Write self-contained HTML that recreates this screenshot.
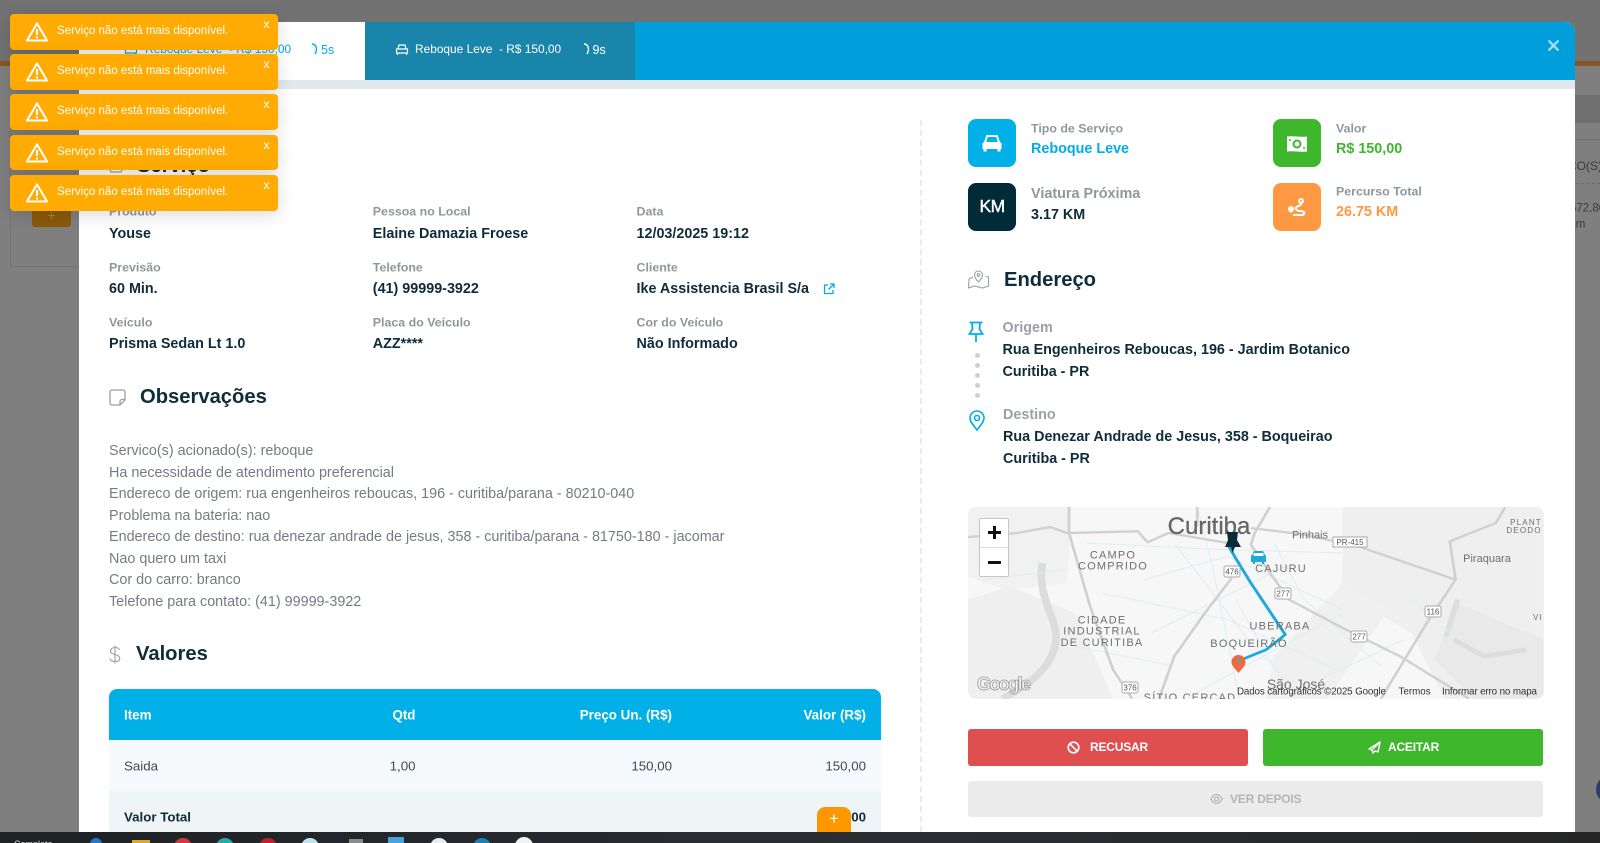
<!DOCTYPE html>
<html lang="pt-BR"><head><meta charset="utf-8"><title>Serviço</title>
<style>
*{box-sizing:border-box}
html,body{margin:0;padding:0}
body{width:1600px;height:843px;overflow:hidden;position:relative;background:#7f7f7f;font-family:"Liberation Sans",sans-serif}
.a{position:absolute;white-space:nowrap;line-height:1}
.l{font-size:12.4px;color:#8f979e;font-weight:bold;transform:translateY(calc(-50% + .5px))}
.v{font-size:14.35px;color:#0e2c39;font-weight:bold;transform:translateY(calc(-50% + 1px))}
.h{font-size:20.2px;color:#0e2c39;font-weight:bold;transform:translateY(calc(-50% + 1px))}
.o{font-size:14.36px;color:#747c83;transform:translateY(calc(-50% + 1px))}
.t{font-size:11.9px;transform:translateY(-50%)}
.r{transform:translate(-100%,-50%)}
.toast{position:absolute;left:9.5px;width:268px;background:#ffab03;border-radius:4px;box-shadow:0 4px 18px rgba(0,0,0,.14)}
.toast span{position:absolute;left:47.5px;top:50%;transform:translateY(-50%);margin-top:-.5px;font-size:11.5px;color:#fff;white-space:nowrap}
.toast i{position:absolute;left:254px;top:3px;font-style:normal;font-size:12px;color:#fff;line-height:14px}
.toast svg{position:absolute;left:16px;top:8px}
.ic{position:absolute;width:48px;height:48px;border-radius:8px}
.btn{position:absolute;border-radius:3px}
.b{font-size:12px;font-weight:bold;transform:translateY(-50%);letter-spacing:-.2px}
svg{position:absolute;overflow:visible}
</style></head><body>

<!-- backdrop -->
<div class="a" style="left:0;top:0;width:1600px;height:61px;background:#727272"></div>
<div class="a" style="left:0;top:61px;width:1600px;height:5px;background:#8a5524"></div>
<div class="a" style="left:1575px;top:95px;width:25px;height:28px;background:#6f6f6f"></div>
<div class="a" style="left:1575px;top:139px;width:25px;height:1px;background:#6c6c6c"></div>
<div class="a" style="left:1575px;top:183px;width:25px;border-top:1px dashed #6c6c6c"></div>
<div class="a" style="left:1568px;top:166px;font-size:12px;color:#3b3b3b;transform:translateY(-50%)">ÇO(S)</div>
<div class="a" style="left:1570px;top:209px;font-size:11.5px;color:#3b3b3b;transform:translateY(-50%)">572,80</div>
<div class="a" style="left:1570px;top:225px;font-size:11.5px;color:#3b3b3b;transform:translateY(-50%)">km</div>
<div class="a" style="left:10px;top:120px;width:70px;height:147px;border:1px solid #747474"></div>
<div class="a" style="left:32px;top:195px;width:39px;height:32px;background:#8a5a0a;border-radius:3px;color:#a8834a;text-align:center;font-size:14px;line-height:40px">+</div>
<div class="a" style="left:1596px;top:775px;width:30px;height:29px;border-radius:50%;background:#2c3c6a"></div>

<!-- modal -->
<div class="a" style="left:78.5px;top:22px;width:1496.5px;height:810px;background:#fff;border-radius:0 10px 0 0"></div>
<div class="a" style="left:78.5px;top:22px;width:1496.5px;height:57.5px;background:#009edb;border-radius:0 10px 0 0"></div>
<div class="a" style="left:78.5px;top:79.5px;width:1496.5px;height:9px;background:#e1e9f0"></div>
<div class="a" style="left:78.5px;top:22px;width:286px;height:57.5px;background:#fff"></div>
<div class="a" style="left:364.5px;top:22px;width:270.5px;height:57.5px;background:#1a85ab"></div>

<svg style="left:124px;top:43px" width="14" height="13" viewBox="0 0 14 13" fill="none" stroke="#00aee6" stroke-width="1.2"><path d="M3 6 4 2h6l1 4M1.500 6h11v4h-11zM2.500 10v2M11.500 10v2"/></svg>
<div class="a t" style="left:145px;top:50px;color:#00aee6">Reboque Leve&nbsp; - R$ 150,00</div>
<svg style="left:311px;top:43px" width="9" height="14" viewBox="0 0 9 14" fill="none" stroke="#00aee6" stroke-width="1.400"><path d="M1 1c4 0 6 5 3 10"/></svg>
<div class="a t" style="left:321px;top:50px;color:#00aee6;font-size:12.500px">5s</div>

<svg style="left:395px;top:43px" width="14" height="13" viewBox="0 0 14 13" fill="none" stroke="#fff" stroke-width="1.200"><path d="M3 6 4 2h6l1 4M1.500 6h11v4h-11zM2.500 10v2M11.500 10v2"/></svg>
<div class="a t" style="left:415px;top:50px;color:#fff">Reboque Leve&nbsp; - R$ 150,00</div>
<svg style="left:583px;top:43px" width="9" height="14" viewBox="0 0 9 14" fill="none" stroke="#fff" stroke-width="1.400"><path d="M1 1c4 0 6 5 3 10"/></svg>
<div class="a t" style="left:592.500px;top:50px;color:#fff;font-size:12.500px">9s</div>

<svg style="left:1548px;top:40px" width="11" height="11" viewBox="0 0 11 11" stroke="#a8def5" stroke-width="2.300" stroke-linecap="round"><path d="M1.200 1.200l8.600 8.600M9.800 1.200l-8.600 8.600"/></svg>

<!-- left col -->
<svg style="left:109px;top:158px" width="14" height="15" viewBox="0 0 14 15" fill="none" stroke="#9a9fa4" stroke-width="1.300"><rect x="1" y="1" width="12" height="13" rx="2"/></svg>
<div class="a h" style="left:137px;top:165px">Serviço</div>

<div class="a l" style="left:109px;top:211px">Produto</div>
<div class="a v" style="left:109px;top:232.500px">Youse</div>
<div class="a l" style="left:372.800px;top:211px">Pessoa no Local</div>
<div class="a v" style="left:372.800px;top:232.500px">Elaine Damazia Froese</div>
<div class="a l" style="left:636.500px;top:211px">Data</div>
<div class="a v" style="left:636.500px;top:232.500px">12/03/2025 19:12</div>

<div class="a l" style="left:109px;top:267px">Previsão</div>
<div class="a v" style="left:109px;top:288px">60 Min.</div>
<div class="a l" style="left:372.800px;top:267px">Telefone</div>
<div class="a v" style="left:372.800px;top:288px">(41) 99999-3922</div>
<div class="a l" style="left:636.500px;top:267px">Cliente</div>
<div class="a v" style="left:636.500px;top:288px">Ike Assistencia Brasil S/a</div>
<svg style="left:823px;top:283px" width="12" height="12" viewBox="0 0 12 12" fill="none" stroke="#00aee6" stroke-width="1.300"><path d="M5 2H1.500v8.500H10V7M7 1h4v4M11 1 5.500 6.500"/></svg>

<div class="a l" style="left:109px;top:322px">Veículo</div>
<div class="a v" style="left:109px;top:343px">Prisma Sedan Lt 1.0</div>
<div class="a l" style="left:372.800px;top:322px">Placa do Veículo</div>
<div class="a v" style="left:372.800px;top:343px">AZZ****</div>
<div class="a l" style="left:636.500px;top:322px">Cor do Veículo</div>
<div class="a v" style="left:636.500px;top:343px">Não Informado</div>

<svg style="left:109px;top:389px" width="17" height="17" viewBox="0 0 17 17" fill="none" stroke="#9a9fa4" stroke-width="1.300"><path d="M3 1h11a2 2 0 0 1 2 2v8l-5 5H3a2 2 0 0 1-2-2V3a2 2 0 0 1 2-2zM16 10.500h-3a2 2 0 0 0-2 2V16"/></svg>
<div class="a h" style="left:140px;top:396px">Observações</div>

<div class="a o" style="left:109px;top:450px">Servico(s) acionado(s): reboque</div>
<div class="a o" style="left:109px;top:471.500px">Ha necessidade de atendimento preferencial</div>
<div class="a o" style="left:109px;top:493px">Endereco de origem: rua engenheiros reboucas, 196 - curitiba/parana - 80210-040</div>
<div class="a o" style="left:109px;top:514.500px">Problema na bateria: nao</div>
<div class="a o" style="left:109px;top:536px">Endereco de destino: rua denezar andrade de jesus, 358 - curitiba/parana - 81750-180 - jacomar</div>
<div class="a o" style="left:109px;top:557.500px">Nao quero um taxi</div>
<div class="a o" style="left:109px;top:579px">Cor do carro: branco</div>
<div class="a o" style="left:109px;top:600.500px">Telefone para contato: (41) 99999-3922</div>

<svg style="left:109px;top:645px" width="12" height="19" viewBox="0 0 12 19" fill="none" stroke="#9a9fa4" stroke-width="1.100"><path d="M10.500 5C10 3 8 2.500 6 2.500S1.500 3.500 1.500 6 4 9 6 9.500s4.800 1.500 4.800 4-2.400 3-4.800 3-4.500-.8-5-3M6 .500v18"/></svg>
<div class="a h" style="left:136px;top:653px">Valores</div>

<div class="a" style="left:109px;top:689px;width:772px;height:51px;background:#00b0e6;border-radius:8px 8px 0 0"></div>
<div class="a" style="left:109px;top:740px;width:772px;height:51px;background:#f6fafc"></div>
<div class="a" style="left:109px;top:791px;width:772px;height:41px;background:#eff4f7"></div>
<div class="a" style="left:124px;top:715px;font-size:13.400px;font-weight:bold;color:#fff;transform:translateY(-50%)">Item</div>
<div class="a r" style="left:415.500px;top:715px;font-size:13.400px;font-weight:bold;color:#fff">Qtd</div>
<div class="a r" style="left:672px;top:715px;font-size:13.400px;font-weight:bold;color:#fff">Preço Un. (R$)</div>
<div class="a r" style="left:866px;top:715px;font-size:13.400px;font-weight:bold;color:#fff">Valor (R$)</div>
<div class="a" style="left:124px;top:765.500px;font-size:13.300px;color:#3c4a52;transform:translateY(-50%)">Saida</div>
<div class="a r" style="left:415.500px;top:765.500px;font-size:13.300px;color:#3c4a52">1,00</div>
<div class="a r" style="left:672px;top:765.500px;font-size:13.300px;color:#3c4a52">150,00</div>
<div class="a r" style="left:866px;top:765.500px;font-size:13.300px;color:#3c4a52">150,00</div>
<div class="a" style="left:124px;top:817px;font-size:13.300px;font-weight:bold;color:#0e2c39;transform:translateY(-50%)">Valor Total</div>
<div class="a r" style="left:866px;top:817px;font-size:13.300px;font-weight:bold;color:#0e2c39">150,00</div>
<div class="a" style="left:817px;top:807px;width:34px;height:25px;background:#ff9800;border-radius:8px 8px 0 0;color:#fff;text-align:center;font-size:17px;line-height:24px">+</div>

<div class="a" style="left:919.500px;top:120px;height:712px;border-left:2px dashed #e9ecef"></div>

<!-- right col cards -->
<div class="ic" style="left:968px;top:119px;background:#00b0e6"></div>
<svg style="left:982px;top:134px" width="20" height="18" viewBox="0 0 20 18" fill="#fff"><path d="M4.500 1h11l2.500 7c1 .5 1.500 1 1.500 2v5h-1v2.500h-3V15h-11v2.500h-3V15h-1v-5c0-1 .5-1.500 1.500-2zM5.800 3 4.300 8h11.400l-1.500-5z" fill-rule="evenodd"/></svg>
<div class="a l" style="left:1031px;top:127.500px">Tipo de Serviço</div>
<div class="a v" style="left:1031px;top:147.500px;color:#00aee6">Reboque Leve</div>

<div class="ic" style="left:1273px;top:119px;background:#3eb72d"></div>
<svg style="left:1286px;top:134.500px" width="22" height="18" viewBox="0 0 22 18"><path d="M1 1.500c7-1 13 1 20 0v15c-7 1-13-1-20 0z" fill="#fff"/><circle cx="11" cy="9" r="4.500" fill="#3eb72d"/><circle cx="11" cy="9" r="2.500" fill="#fff"/><circle cx="4" cy="5" r="1" fill="#3eb72d"/><circle cx="18" cy="13" r="1" fill="#3eb72d"/></svg>
<div class="a l" style="left:1336px;top:127.500px">Valor</div>
<div class="a v" style="left:1336px;top:147.500px;color:#3eb72d">R$ 150,00</div>

<div class="ic" style="left:968px;top:183px;background:#022b3a"></div>
<div class="a" style="left:979.500px;top:198px;font-size:17.500px;color:#fff;letter-spacing:-.5px;-webkit-text-stroke:.4px #fff">KM</div>
<div class="a" style="left:1031px;top:193.500px;font-size:14.400px;font-weight:bold;color:#8f979e;transform:translateY(-50%)">Viatura Próxima</div>
<div class="a v" style="left:1031px;top:213.500px">3.17 KM</div>

<div class="ic" style="left:1273px;top:183px;background:#ff9843"></div>
<svg style="left:1287px;top:197px" width="20" height="20" viewBox="0 0 20 20" fill="none" stroke="#fff" stroke-width="2"><circle cx="14" cy="4" r="2"/><path d="M14 7c0 2-4 2-5 3.500S10 14 13 14c3 0 5 1 4 3-.5 1-2 1-3 1H6"/><path d="M4 9a3 3 0 0 1 3 3c0 2-3 4-3 4s-3-2-3-4a3 3 0 0 1 3-3z" fill="#fff" stroke="none"/></svg>
<div class="a l" style="left:1336px;top:191px">Percurso Total</div>
<div class="a v" style="left:1336px;top:211px;color:#ff9843">26.75 KM</div>

<svg style="left:968px;top:270px" width="21" height="19" viewBox="0 0 21 19" fill="none" stroke="#9a9fa4" stroke-width="1.100"><path d="M5 7 1 9l-.500 9 6-2 8 2 6-2V7l-3-1"/><path d="M10.500 1a4 4 0 0 1 4 4c0 3-4 7-4 7s-4-4-4-7a4 4 0 0 1 4-4z"/><circle cx="10.500" cy="5" r="1.300"/></svg>
<div class="a h" style="left:1004px;top:279px">Endereço</div>

<svg style="left:968px;top:321px" width="16" height="22" viewBox="0 0 16 22" fill="none" stroke="#00aee6" stroke-width="1.800"><path d="M1.500 1.500h13M4 1.500 4.500 8 1.500 13h13l-3-5 .5-6.500M8 13v8"/></svg>
<div class="a" style="left:974.500px;top:352.500px;width:5.500px;height:5.500px;border-radius:50%;background:#cfcfcf"></div>
<div class="a" style="left:974.500px;top:362.500px;width:5.500px;height:5.500px;border-radius:50%;background:#cfcfcf"></div>
<div class="a" style="left:974.500px;top:372.500px;width:5.500px;height:5.500px;border-radius:50%;background:#cfcfcf"></div>
<div class="a" style="left:974.500px;top:382.500px;width:5.500px;height:5.500px;border-radius:50%;background:#cfcfcf"></div>
<div class="a" style="left:974.500px;top:392.500px;width:5.500px;height:5.500px;border-radius:50%;background:#cfcfcf"></div>
<svg style="left:969px;top:410px" width="16" height="21" viewBox="0 0 16 21" fill="none" stroke="#00aee6" stroke-width="1.600"><path d="M8 1a7 7 0 0 1 7 7c0 4-4 8-7 12C5 16 1 12 1 8a7 7 0 0 1 7-7z"/><circle cx="8" cy="8" r="2.500"/></svg>

<div class="a" style="left:1002.500px;top:327.500px;font-size:14.350px;font-weight:bold;color:#9aa1a8;transform:translateY(-50%)">Origem</div>
<div class="a v" style="left:1002.500px;top:348.500px">Rua Engenheiros Reboucas, 196 - Jardim Botanico</div>
<div class="a v" style="left:1002.500px;top:370.500px">Curitiba - PR</div>
<div class="a" style="left:1003px;top:414.500px;font-size:14.350px;font-weight:bold;color:#9aa1a8;transform:translateY(-50%)">Destino</div>
<div class="a v" style="left:1003px;top:435.500px">Rua Denezar Andrade de Jesus, 358 - Boqueirao</div>
<div class="a v" style="left:1003px;top:457.500px">Curitiba - PR</div>

<!-- map -->
<div class="a" style="left:968px;top:507px;width:576px;height:192px;border-radius:8px;overflow:hidden;background:#f7f7f7">
<svg style="left:0;top:0" width="576" height="192" viewBox="0 0 576 192" font-family="'Liberation Sans',sans-serif">
 <g transform="translate(-8,-7.330) scale(.3827,.3333)" fill="none">
  <path d="M21 22H290L280 250 120 270 21 230z" fill="#f1f1f1"/>
  <path d="M21 300 130 260 300 340 400 597H21z" fill="#efefef"/>
  <path d="M1000 22h525v575h-260L1180 400 1000 280z" fill="#efefef"/>
  <path d="M1300 310 1525 420V597H1340L1240 480z" fill="#e9e9e9"/>
  <path d="M820 470 870 410 1000 250 1120 330 960 597H800z" fill="#f0f0f0"/>
  <path d="M215 190C200 300 260 360 250 430S180 560 110 597" stroke="#dcdcdc" stroke-width="20"/>
  <path d="M1290 420 1370 470 1480 450M1300 300l-30 110" stroke="#dddddd" stroke-width="14"/>
  <g stroke="#deeff0" stroke-width="3">
   <path d="M330 130 680 150 1000 160M480 240 700 170 1000 330M560 130 760 430 900 597M620 22l40 180 70 395M370 280 700 360 1000 520M500 400 850 200M600 590 1000 340M820 130 900 300 1100 500M940 540 1160 420"/>
   <path d="M60 240 280 210M300 440 560 500M720 300 850 560M1180 300 1280 400"/>
  </g>
  <g stroke="#d0d0d0" stroke-width="7" stroke-linejoin="round">
   <path d="M21 112 150 100 235 82 280 100 465 95 490 128 545 100 700 130"/>
   <path d="M285 22 285 100 340 320 400 510 450 597"/>
   <path d="M810 22 770 100 760 135 810 220 860 300 1000 385 1150 470 1330 597"/>
   <path d="M710 235 640 340 560 470 520 597"/>
   <path d="M1040 140 1295 240 1225 360 1100 597"/>
   <path d="M1295 240 1280 125 1400 70 1425 22"/>
   <path d="M760 85 900 105 1040 140"/>
   <path d="M620 22V80"/>
  </g>
  <path d="M700 135 720 175 760 250 850 405 800 450 740 478" stroke="#1da9dc" stroke-width="8" stroke-linejoin="round" stroke-linecap="round"/>
 </g>
 <g fill="#6f6f6f" text-anchor="middle" font-size="11" letter-spacing="1.200">
  <text x="241" y="27" font-size="24" letter-spacing="0" fill="#666" stroke="#666" stroke-width=".3">Curitiba</text>
  <text x="342" y="31.500" font-size="11" letter-spacing="0">Pinhais</text>
  <text x="145" y="51.500">CAMPO</text><text x="145" y="62.500">COMPRIDO</text>
  <text x="313" y="65">CAJURU</text>
  <text x="519" y="55" font-size="11" letter-spacing="0">Piraquara</text>
  <text x="558" y="18" font-size="8">PLANT</text><text x="556" y="26" font-size="8">DEODO</text>
  <text x="134" y="116.500">CIDADE</text><text x="134" y="127.500">INDUSTRIAL</text><text x="134" y="139">DE CURITIBA</text>
  <text x="312" y="122.500">UBERABA</text><text x="281" y="140">BOQUEIRÃO</text>
  <text x="328" y="182" font-size="14" letter-spacing="0">São José</text>
  <text x="222" y="194">SÍTIO CERCAD</text>
  <text x="570" y="113" font-size="8">VI</text>
 </g>
 <g font-size="8" text-anchor="middle" fill="#555">
  <rect x="365" y="30" width="34" height="10" fill="#fff" stroke="#aaa"/><text x="382" y="38">PR-415</text>
  <rect x="256" y="59" width="16" height="11" rx="2" fill="#fff" stroke="#aaa"/><text x="264" y="67.500">476</text>
  <rect x="307" y="81" width="16" height="11" rx="2" fill="#fff" stroke="#aaa"/><text x="315" y="89.500">277</text>
  <rect x="457" y="99" width="16" height="11" rx="2" fill="#fff" stroke="#aaa"/><text x="465" y="107.500">116</text>
  <rect x="383" y="124" width="16" height="11" rx="2" fill="#fff" stroke="#aaa"/><text x="391" y="132.500">277</text>
  <rect x="154" y="175" width="16" height="11" rx="2" fill="#fff" stroke="#aaa"/><text x="162" y="183.500">376</text>
 </g>
 <path d="M259 25h11l-1 8 4 7h-6l-2.500 6-1.500-6h-6l3-7z" fill="#0d2b36"/>
 <path d="M286 44h9l2 4c1 .5 1 1 1 2v5h-2v2h-2v-2h-7v2h-2v-2h-2v-5c0-1 0-1.500 1-2z" fill="#1da9dc"/>
 <rect x="285.500" y="46" width="10" height="3" fill="#fff"/>
 <path d="M270.500 148a7 7 0 0 1 7 7c0 4-4 7-7 11-3-4-7-7-7-11a7 7 0 0 1 7-7z" fill="#f0683c"/>
 <circle cx="270.500" cy="154" r="2.500" fill="#8a8f92"/>
 <text x="9" y="183" font-size="18" font-weight="bold" fill="#f5f5f5" stroke="#9a9a9a" stroke-width=".8" textLength="54">Google</text>
 <g font-size="9.800" fill="#333">
  <text x="269" y="187.500" textLength="149">Dados cartográficos ©2025 Google</text>
  <text x="430.500" y="187.500">Termos</text>
  <text x="474" y="187.500" textLength="95">Informar erro no mapa</text>
 </g>
</svg>
<div class="a" style="left:11px;top:11px;width:30px;height:59px;background:#fff;border:1px solid #c6c6c6;border-radius:2px"></div>
<div class="a" style="left:12px;top:40px;width:28px;height:1px;background:#ddd"></div>
<div class="a" style="left:20px;top:24px;width:12.500px;height:2.500px;background:#111"></div>
<div class="a" style="left:25px;top:19px;width:2.500px;height:12.500px;background:#111"></div>
<div class="a" style="left:20px;top:54px;width:12.500px;height:2.500px;background:#111"></div>
</div>

<!-- buttons -->
<div class="btn" style="left:968px;top:729px;width:280px;height:36.500px;background:#e04f4f"></div>
<div class="btn" style="left:1263px;top:729px;width:280px;height:36.500px;background:#3eb72d"></div>
<div class="btn" style="left:968px;top:781px;width:575px;height:36px;background:#ebebeb"></div>
<svg style="left:1067px;top:740.500px" width="13" height="13" viewBox="0 0 13 13" fill="none" stroke="#fff" stroke-width="1.600"><circle cx="6.500" cy="6.500" r="5.300"/><path d="M2.800 2.800l7.400 7.400"/></svg>
<div class="a b" style="left:1090px;top:747px;color:#fff">RECUSAR</div>
<svg style="left:1368px;top:740.500px" width="13" height="13" viewBox="0 0 13 13" fill="none" stroke="#fff" stroke-width="1.400" stroke-linejoin="round"><path d="M12 1 1 8l3 1 1 3 2-2 3 1zM12 1 4 9"/></svg>
<div class="a b" style="left:1388px;top:747px;color:#fff">ACEITAR</div>
<svg style="left:1210px;top:793px" width="13" height="12" viewBox="0 0 13 12" fill="none" stroke="#b5b5b5" stroke-width="1.200"><path d="M.8 6C3 2.500 5 1.500 6.500 1.500S10 2.500 12.200 6C10 9.500 8 10.500 6.500 10.500S3 9.500.8 6z"/><circle cx="6.500" cy="6" r="2"/></svg>
<div class="a b" style="left:1230px;top:799px;color:#b5b5b5">VER DEPOIS</div>

<!-- toasts -->
<div class="toast" style="top:14px;height:35.500px"><svg width="22" height="20" viewBox="0 0 22 20" fill="none" stroke="#fff" stroke-width="2.100" stroke-linejoin="round"><path d="M11 1.500 21 18.500H1z"/><path d="M11 7v6M11 14.500v2"/></svg><span>Serviço não está mais disponível.</span><i>x</i></div>
<div class="toast" style="top:54px;height:35.500px"><svg width="22" height="20" viewBox="0 0 22 20" fill="none" stroke="#fff" stroke-width="2.100" stroke-linejoin="round"><path d="M11 1.500 21 18.500H1z"/><path d="M11 7v6M11 14.500v2"/></svg><span>Serviço não está mais disponível.</span><i>x</i></div>
<div class="toast" style="top:94px;height:35.500px"><svg width="22" height="20" viewBox="0 0 22 20" fill="none" stroke="#fff" stroke-width="2.100" stroke-linejoin="round"><path d="M11 1.500 21 18.500H1z"/><path d="M11 7v6M11 14.500v2"/></svg><span>Serviço não está mais disponível.</span><i>x</i></div>
<div class="toast" style="top:135px;height:34.500px"><svg width="22" height="20" viewBox="0 0 22 20" fill="none" stroke="#fff" stroke-width="2.100" stroke-linejoin="round"><path d="M11 1.500 21 18.500H1z"/><path d="M11 7v6M11 14.500v2"/></svg><span>Serviço não está mais disponível.</span><i>x</i></div>
<div class="toast" style="top:175px;height:35.500px"><svg width="22" height="20" viewBox="0 0 22 20" fill="none" stroke="#fff" stroke-width="2.100" stroke-linejoin="round"><path d="M11 1.500 21 18.500H1z"/><path d="M11 7v6M11 14.500v2"/></svg><span>Serviço não está mais disponível.</span><i>x</i></div>

<!-- taskbar -->
<div class="a" style="left:0;top:832px;width:1600px;height:11px;background:linear-gradient(90deg,#1f2124,#2a2e33 55%,#252525);overflow:hidden">
 <div class="a" style="left:14px;top:8px;font-size:9px;color:#ddd">Completo</div>
 <div class="a" style="left:90px;top:6px;width:12px;height:12px;background:#1f78d1;border-radius:50%"></div>
 <div class="a" style="left:132px;top:8px;width:18px;height:10px;background:#d9a92e"></div>
 <div class="a" style="left:174px;top:6px;width:18px;height:18px;background:#d0393b;border-radius:50%"></div>
 <div class="a" style="left:216px;top:6px;width:18px;height:18px;background:#2aa9a9;border-radius:50%"></div>
 <div class="a" style="left:259px;top:6px;width:18px;height:18px;background:#c01f2e;border-radius:50%"></div>
 <div class="a" style="left:301px;top:6px;width:18px;height:18px;background:#bfe3f2;border-radius:50%"></div>
 <div class="a" style="left:349px;top:7px;width:14px;height:14px;background:#8b8b8b"></div>
 <div class="a" style="left:388px;top:5px;width:16px;height:14px;background:#4aa3d8"></div>
 <div class="a" style="left:430px;top:6px;width:18px;height:18px;background:#e8edf5;border-radius:50%"></div>
 <div class="a" style="left:473px;top:6px;width:18px;height:18px;background:#1c7fb5;border-radius:50%"></div>
 <div class="a" style="left:515px;top:5px;width:18px;height:18px;background:#f2f2f2;border-radius:50%"></div>
</div>
</body></html>
